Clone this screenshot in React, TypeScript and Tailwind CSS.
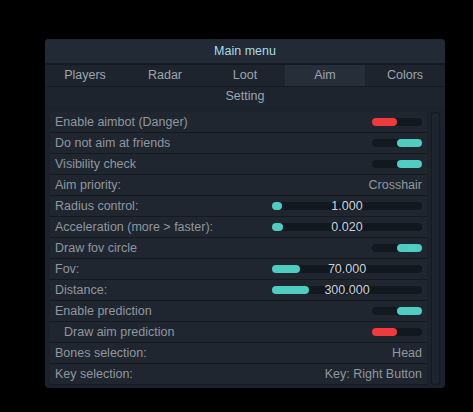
import React from 'react';

type Row =
  | { kind: 'toggle'; label: string; on: boolean; indent?: boolean }
  | { kind: 'slider'; label: string; value: string; fill: number }
  | { kind: 'text'; label: string; value: string };

const rows: Row[] = [
  { kind: 'toggle', label: 'Enable aimbot (Danger)', on: false },
  { kind: 'toggle', label: 'Do not aim at friends', on: true },
  { kind: 'toggle', label: 'Visibility check', on: true },
  { kind: 'text', label: 'Aim priority:', value: 'Crosshair' },
  { kind: 'slider', label: 'Radius control:', value: '1.000', fill: 10 },
  { kind: 'slider', label: 'Acceleration (more > faster):', value: '0.020', fill: 11 },
  { kind: 'toggle', label: 'Draw fov circle', on: true },
  { kind: 'slider', label: 'Fov:', value: '70.000', fill: 28 },
  { kind: 'slider', label: 'Distance:', value: '300.000', fill: 37 },
  { kind: 'toggle', label: 'Enable prediction', on: true },
  { kind: 'toggle', label: 'Draw aim prediction', on: false, indent: true },
  { kind: 'text', label: 'Bones selection:', value: 'Head' },
  { kind: 'text', label: 'Key selection:', value: 'Key: Right Button' },
];

const tabs = ['Players', 'Radar', 'Loot', 'Aim', 'Colors'];

function Toggle({ on }: { on: boolean }) {
  return (
    <div className="flex h-[8px] w-[50px] rounded-full bg-[#121820]">
      {on ? (
        <div className="ml-auto h-full w-[25px] rounded-full bg-[#4ecdc0]" />
      ) : (
        <div className="h-full w-[25px] rounded-full bg-[#ef3b3b]" />
      )}
    </div>
  );
}

function Slider({ value, fill }: { value: string; fill: number }) {
  return (
    <div className="relative h-[21px] w-[150px]">
      <div className="absolute left-0 top-[6.5px] h-[8px] w-full rounded-full bg-[#121820]" />
      <div className="absolute left-0 top-[6.5px] h-[8px] rounded-full bg-[#4ecdc0]" style={{ width: fill }} />
      <div className="absolute inset-0 flex items-center justify-center text-[#ccd2d8]">{value}</div>
    </div>
  );
}

export default function App() {
  return (
    <div
      className="h-[412px] w-[473px] bg-black pt-[39px] pl-[45px]"
      style={{ fontFamily: '"Liberation Sans", Arial, sans-serif' }}
    >
      <div className="flex h-[349px] w-[400px] flex-col rounded-[4px] bg-[#1b222b] text-[12.5px]">
        <div className="flex h-[24px] items-center justify-center rounded-t-[4px] bg-[#212a35] text-[#a9dde4]">
          Main menu
        </div>
        <div className="h-[2px] bg-[#141a21]" />
        <div className="grid h-[21px] grid-cols-5 bg-[#1d242e] text-[#9ca5ae]">
          {tabs.map((t) => (
            <div
              key={t}
              className={`flex items-center justify-center ${t === 'Aim' ? 'bg-[#252e39]' : ''}`}
            >
              {t}
            </div>
          ))}
        </div>
        <div className="h-px bg-[#141a21]" />
        <div className="flex h-[19px] items-center justify-center bg-[#1d242e] text-[#9ca5ae]">Setting</div>
        <div className="flex flex-1 gap-[4px] px-[5px] pt-[6px]">
          <div className="flex h-[273px] w-[377px] flex-col bg-[#161c24]">
            {rows.map((r) => (
              <div
                key={r.label}
                className="flex h-[21px] items-center justify-between border-b border-[#141a21] bg-[#1f2630] pr-[5px] text-[#8f979f]"
              >
                <span className={r.kind === 'toggle' && r.indent ? 'pl-[14px]' : 'pl-[5px]'}>{r.label}</span>
                {r.kind === 'toggle' && <Toggle on={r.on} />}
                {r.kind === 'slider' && <Slider value={r.value} fill={r.fill} />}
                {r.kind === 'text' && <span className="text-[#8f979f]">{r.value}</span>}
              </div>
            ))}
          </div>
          <div className="h-[273px] w-[9px] rounded-[3px] bg-[#151b22] p-[1px]">
            <div className="h-full w-full rounded-[3px] bg-[#1e2530]" />
          </div>
        </div>
      </div>
    </div>
  );
}
